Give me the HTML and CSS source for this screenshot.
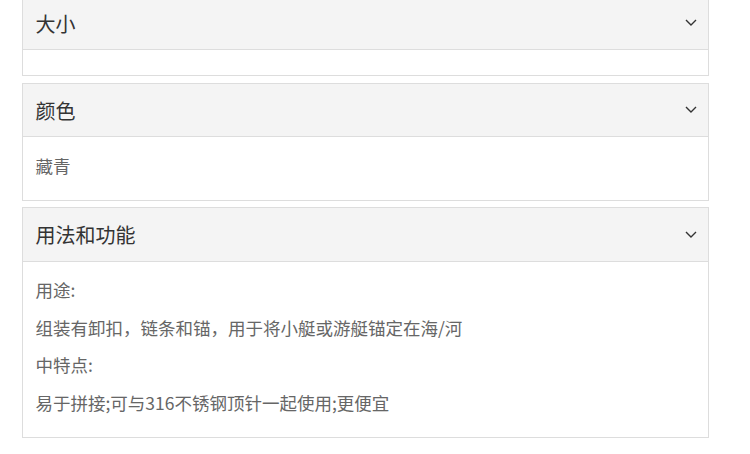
FILE: index.html
```html
<!DOCTYPE html>
<html lang="zh">
<head>
<meta charset="utf-8">
<link rel="stylesheet" href="styles.css">
</head>
<body>
<div class="accordion">
  <section class="panel">
    <div class="panel-head">
      <span class="title">大小</span>
      <svg class="chev" viewBox="0 0 12 7" width="12" height="7"><path d="M1 1l5 5 5-5" fill="none" stroke="#333" stroke-width="1.4"/></svg>
    </div>
    <div class="panel-body"></div>
  </section>
  <section class="panel">
    <div class="panel-head">
      <span class="title">颜色</span>
      <svg class="chev" viewBox="0 0 12 7" width="12" height="7"><path d="M1 1l5 5 5-5" fill="none" stroke="#333" stroke-width="1.4"/></svg>
    </div>
    <div class="panel-body">
      <p>藏青</p>
    </div>
  </section>
  <section class="panel">
    <div class="panel-head">
      <span class="title">用法和功能</span>
      <svg class="chev" viewBox="0 0 12 7" width="12" height="7"><path d="M1 1l5 5 5-5" fill="none" stroke="#333" stroke-width="1.4"/></svg>
    </div>
    <div class="panel-body">
      <p>用途:</p>
      <p>组装有卸扣，链条和锚，用于将小艇或游艇锚定在海/河</p>
      <p>中特点:</p>
      <p>易于拼接;可与316不锈钢顶针一起使用;更便宜</p>
    </div>
  </section>
</div>
</body>
</html>
```
FILE: styles.css
```css
html, body {
  margin: 0;
  padding: 0;
  background: #fff;
}
body {
  font-family: "Noto Sans CJK SC", "Noto Sans", sans-serif;
  overflow: hidden;
}
.accordion {
  margin: -4.5px 0 0 22px;
  width: 687px;
}
.panel {
  border: 1px solid #dddddd;
  margin-bottom: 6.5px;
  background: #fff;
}
.panel-head {
  height: 52.5px;
  background: #f4f4f4;
  border-bottom: 1px solid #dddddd;
  display: flex;
  align-items: center;
  justify-content: space-between;
  padding: 0 11px 0 12.5px;
}
.title {
  font-size: 20px;
  color: #333333;
  line-height: 1;
  padding-top: 2px;
}
.chev {
  display: block;
}
.panel-body {
  padding: 9.5px 12.5px 15.5px;
}
.panel-body p {
  margin: 0;
  font-size: 17.5px;
  line-height: 37.5px;
  color: #666666;
}
```
